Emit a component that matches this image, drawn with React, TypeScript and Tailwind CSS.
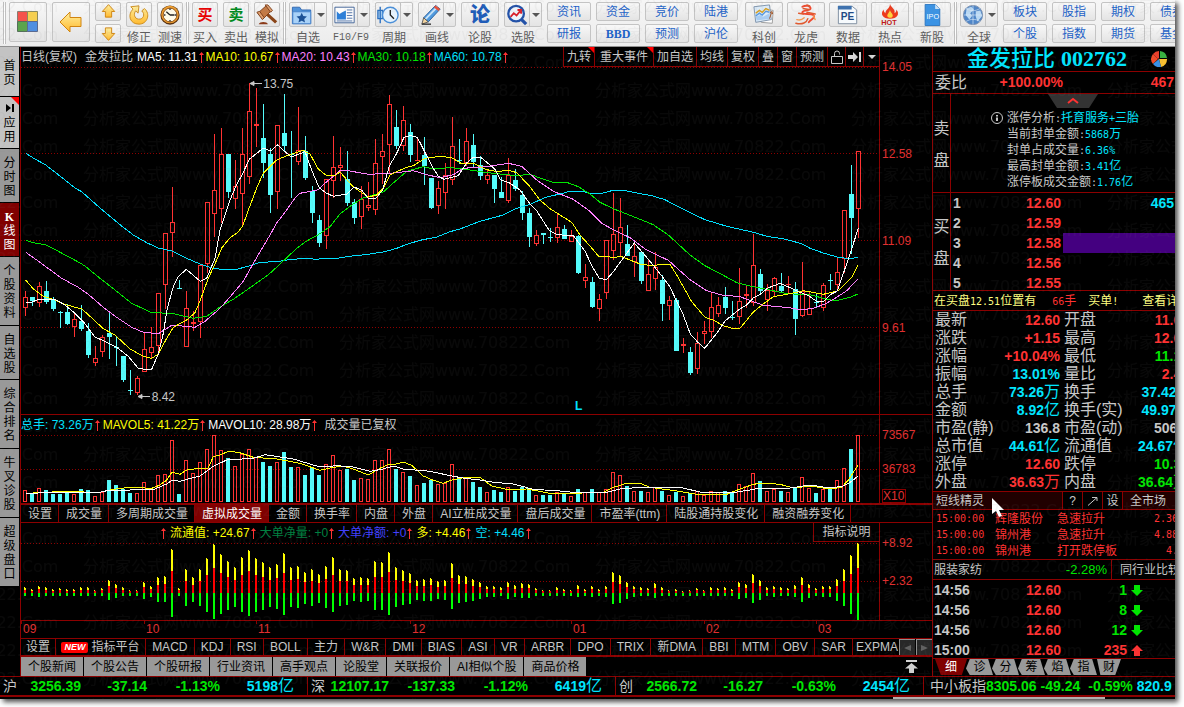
import React from 'react';
import clsx from 'clsx';

type Candle = [dir: 'u' | 'd', high: number, top: number, bottom: number, low: number];

// Series values are stored in thirds of a pixel
const CANDLES: Candle[] = [
  ['u', 693, 712, 745, 767], ['d', 711, 711, 723, 738], ['u', 666, 679, 728, 740], ['d', 662, 693, 727, 733],
  ['d', 712, 718, 747, 752], ['d', 754, 757, 760, 804], ['d', 733, 756, 792, 795], ['u', 757, 778, 800, 830],
  ['d', 736, 783, 807, 812], ['d', 790, 813, 886, 893], ['u', 858, 895, 908, 917], ['u', 826, 832, 875, 890],
  ['d', 755, 819, 831, 897], ['d', 828, 861, 864, 918], ['d', 888, 888, 960, 966], ['d', 931, 990, 993, 1004],
  ['u', 949, 955, 1000, 1006], ['u', 820, 868, 935, 935], ['u', 800, 862, 878, 893], ['u', 700, 700, 859, 885],
  ['u', 520, 520, 674, 747], ['u', 381, 487, 518, 590], ['d', 660, 684, 687, 687], ['u', 694, 745, 862, 862],
  ['u', 752, 787, 791, 813], ['u', 616, 616, 785, 833], ['u', 427, 427, 613, 640], ['u', 222, 391, 461, 530],
  ['u', 205, 281, 446, 488], ['d', 282, 282, 396, 414], ['u', 301, 379, 416, 447], ['u', 205, 283, 401, 498],
  ['u', 70, 154, 350, 372], ['u', 84, 192, 199, 260], ['d', 132, 234, 309, 353], ['d', 265, 282, 405, 459],
  ['u', 196, 196, 395, 447], ['d', 102, 219, 258, 277], ['d', 213, 281, 285, 414], ['u', 141, 271, 305, 314],
  ['d', 228, 273, 354, 359], ['d', 379, 393, 459, 489], ['d', 465, 480, 549, 561], ['u', 358, 358, 527, 567],
  ['u', 228, 322, 362, 414], ['u', 261, 316, 323, 362], ['d', 273, 357, 429, 438], ['d', 417, 426, 474, 492],
  ['u', 379, 418, 470, 507], ['u', 366, 435, 445, 452], ['u', 237, 310, 449, 465], ['u', 222, 274, 290, 372],
  ['u', 105, 133, 254, 338], ['d', 150, 201, 258, 266], ['u', 138, 181, 257, 272], ['d', 192, 216, 285, 306],
  ['u', 234, 299, 303, 303], ['d', 231, 285, 318, 375], ['d', 354, 354, 444, 447], ['u', 363, 385, 437, 461],
  ['u', 309, 345, 398, 447], ['u', 171, 259, 359, 375], ['d', 237, 300, 303, 312], ['u', 204, 244, 309, 318],
  ['d', 222, 255, 306, 321], ['d', 288, 315, 348, 360], ['u', 327, 346, 360, 372], ['d', 345, 345, 387, 429],
  ['d', 351, 396, 414, 414], ['u', 294, 344, 422, 429], ['d', 327, 360, 387, 393], ['d', 393, 405, 459, 480],
  ['d', 444, 459, 531, 561], ['u', 510, 525, 552, 557], ['d', 519, 519, 524, 552], ['d', 504, 531, 534, 546],
  ['u', 462, 502, 533, 548], ['d', 495, 507, 537, 537], ['u', 510, 528, 545, 545], ['d', 525, 528, 639, 642],
  ['u', 612, 652, 662, 684], ['d', 651, 666, 741, 744], ['u', 702, 718, 748, 782], ['u', 541, 541, 700, 716],
  ['u', 399, 523, 572, 600], ['u', 414, 502, 550, 590], ['d', 495, 552, 588, 588], ['u', 552, 589, 605, 651],
  ['d', 573, 576, 663, 672], ['u', 600, 643, 692, 692], ['u', 576, 622, 656, 689], ['d', 645, 660, 732, 783],
  ['u', 708, 721, 739, 779], ['d', 714, 720, 873, 873], ['u', 834, 853, 857, 879], ['d', 861, 876, 939, 945],
  ['u', 816, 848, 926, 942], ['u', 782, 814, 823, 851], ['u', 695, 742, 815, 833], ['u', 711, 736, 761, 771],
  ['d', 681, 711, 744, 762], ['d', 723, 771, 774, 780], ['u', 624, 724, 770, 792], ['u', 676, 703, 709, 744],
  ['u', 522, 616, 728, 738], ['d', 627, 642, 693, 699], ['u', 673, 690, 719, 753], ['u', 650, 655, 695, 710],
  ['d', 639, 678, 693, 698], ['u', 648, 671, 674, 702], ['d', 666, 687, 777, 825], ['u', 606, 693, 767, 771],
  ['u', 693, 745, 764, 764], ['d', 702, 726, 729, 741], ['u', 670, 676, 743, 753], ['d', 642, 660, 663, 690],
  ['u', 592, 637, 674, 686], ['u', 451, 451, 598, 640], ['d', 315, 402, 474, 582], ['u', 274, 274, 446, 533],
];

const VOLUMES = [
  240, 252, 235, 240, 252, 252, 249, 252, 237, 240, 258, 245, 210, 225, 237, 249, 250, 216, 234, 196,
  192, 91, 252, 151, 190, 157, 118, 76, 121, 144, 169, 133, 118, 142, 156, 168, 157, 126, 171, 172,
  195, 171, 195, 163, 136, 181, 177, 210, 205, 207, 151, 151, 118, 177, 186, 198, 226, 219, 210, 222,
  220, 163, 207, 204, 216, 231, 247, 240, 246, 232, 243, 231, 234, 256, 255, 255, 246, 252, 259, 237,
  247, 237, 247, 238, 187, 196, 228, 243, 243, 247, 232, 243, 256, 246, 259, 250, 244, 256, 244, 247,
  243, 250, 223, 229, 190, 213, 243, 238, 243, 247, 234, 202, 234, 249, 238, 237, 211, 175, 117, 76,
];

const FORCES = [
  530, 537, 529, 531, 537, 534, 538, 537, 532, 532, 541, 533, 511, 522, 531, 540, 540, 517, 528, 502,
  498, 418, 535, 478, 500, 478, 443, 402, 432, 454, 471, 442, 421, 445, 456, 470, 462, 430, 471, 468,
  487, 476, 492, 469, 442, 478, 480, 505, 501, 504, 454, 457, 425, 472, 480, 489, 511, 507, 503, 514,
  510, 460, 495, 498, 507, 517, 528, 528, 531, 517, 525, 519, 522, 535, 541, 540, 532, 538, 540, 526,
  537, 528, 537, 528, 487, 495, 517, 528, 531, 534, 520, 531, 540, 538, 542, 540, 534, 540, 531, 534,
  531, 537, 517, 522, 493, 511, 531, 528, 531, 534, 526, 502, 522, 535, 528, 528, 508, 478, 436, 400,
];

const MA_LINES = [
  {
    color: '#00e0ff',
    points: '77,280 100,294 137,315 175,344 225,384 245,395 300,444 360,494 400,525 440,548 475,564 515,573 560,595 600,612 635,624 665,628 710,628 750,617 780,607 830,605 860,600 915,595 950,598 975,595 1010,595 1055,588 1095,584 1155,575 1190,565 1215,555 1260,541 1310,531 1350,515 1380,507 1440,484 1480,473 1510,465 1545,447 1590,433 1640,411 1680,402 1710,394 1745,394 1775,401 1800,401 1840,391 1870,391 1905,398 1955,407 1995,419 2040,443 2115,479 2180,499 2260,517 2305,530 2350,536 2405,551 2430,565 2470,579 2515,592 2550,596 2574,592',
  },
  {
    color: '#00e600',
    points: '77,541 100,548 137,554 175,574 235,606 255,618 300,655 350,694 395,730 455,758 515,760 580,775 620,769 660,741 700,718 740,690 790,655 810,640 850,603 890,565 920,543 955,524 990,500 1020,462 1060,432 1090,414 1120,405 1150,396 1180,369 1220,334 1270,320 1295,326 1355,323 1410,330 1450,336 1490,341 1550,347 1590,343 1620,354 1660,367 1700,367 1735,380 1770,402 1800,427 1840,446 1905,472 1960,494 2005,525 2070,585 2115,617 2170,646 2210,668 2255,679 2310,690 2360,701 2430,704 2470,715 2505,723 2550,712 2574,702',
  },
  {
    color: '#ff80ff',
    points: '77,577 110,600 140,622 185,655 235,682 265,703 310,742 350,772 395,802 430,817 475,821 515,796 545,798 585,802 615,784 660,745 690,711 730,664 760,610 810,525 830,489 860,450 885,414 900,400 920,396 955,389 980,365 1020,332 1045,332 1105,343 1170,340 1240,332 1280,344 1320,353 1360,344 1390,325 1460,320 1525,310 1565,319 1610,360 1660,394 1720,418 1770,454 1805,490 1840,509 1890,533 1940,570 2005,601 2070,659 2120,692 2165,705 2220,710 2290,736 2370,743 2400,750 2440,745 2475,732 2510,712 2540,692 2574,657',
  },
  {
    color: '#ffff00',
    points: '77,660 100,687 130,709 160,718 185,730 215,739 245,747 265,764 310,806 345,825 390,867 430,889 455,895 475,882 500,835 520,802 560,780 585,758 600,723 625,655 645,612 665,564 690,533 715,516 728,498 745,451 770,384 790,340 830,300 860,287 910,271 930,282 955,327 980,347 1005,347 1020,336 1060,381 1105,411 1130,405 1150,385 1170,345 1190,335 1220,322 1240,317 1275,295 1320,289 1355,293 1385,311 1420,309 1460,329 1495,335 1525,330 1550,338 1590,380 1620,420 1650,446 1715,487 1740,525 1770,558 1795,588 1840,592 1865,590 1925,614 1955,616 2010,613 2030,645 2075,725 2115,772 2140,780 2170,797 2200,806 2220,805 2260,756 2290,732 2320,710 2370,701 2410,692 2470,703 2515,692 2555,652 2574,616',
  },
  {
    color: '#ffffff',
    points: '77,727 95,727 115,718 165,718 195,735 225,760 250,785 285,831 310,842 350,862 385,889 415,925 435,928 455,928 475,882 490,820 502,745 520,680 535,650 559,628 580,646 601,664 620,655 645,595 660,511 690,420 710,373 725,347 748,298 790,264 812,273 832,254 853,273 874,291 915,275 937,335 958,384 979,399 1000,409 1042,402 1063,381 1085,391 1105,415 1128,415 1148,390 1168,318 1190,280 1212,232 1232,227 1252,232 1273,273 1295,317 1315,349 1332,358 1375,347 1400,309 1420,292 1442,292 1462,308 1485,328 1502,360 1525,367 1560,390 1590,432 1610,452 1648,512 1672,524 1720,527 1756,575 1777,620 1798,655 1819,659 1840,635 1903,549 1945,598 1980,641 2008,677 2050,765 2071,822 2092,845 2114,865 2150,820 2176,782 2218,748 2240,735 2260,714 2285,700 2302,685 2340,670 2370,683 2400,697 2428,708 2448,723 2470,725 2491,704 2512,693 2533,632 2554,570 2575,505',
  },
];

const VOLUME_LINES = [
  {
    color: '#ffff00',
    points: '77,252 115,247 200,245 300,247 340,238 390,232 455,235 480,225 500,210 515,187 540,193 560,180 600,175 625,174 640,140 660,135 685,124 715,127 760,142 830,147 900,160 960,181 1000,172 1030,169 1060,177 1105,195 1140,175 1165,163 1185,163 1210,156 1235,166 1270,198 1300,211 1330,220 1355,210 1395,202 1440,202 1475,228 1530,240 1580,237 1650,250 1720,250 1810,247 1840,232 1880,220 1920,220 1950,232 2030,243 2090,253 2180,253 2220,237 2260,223 2290,219 2340,223 2380,234 2430,228 2490,237 2525,232 2545,210 2574,166',
  },
  {
    color: '#ffffff',
    points: '77,250 200,247 290,249 330,240 390,240 465,237 500,222 515,211 540,214 575,204 600,198 640,169 680,150 760,145 795,134 880,147 960,171 1010,167 1060,171 1110,184 1145,178 1180,168 1210,177 1290,184 1355,198 1395,205 1440,210 1480,217 1540,222 1600,238 1680,243 1740,249 1820,247 1860,237 1920,232 2040,232 2100,246 2190,249 2250,240 2280,234 2370,234 2430,225 2490,234 2530,228 2555,214 2574,198',
  },
];

const px = (v: number) => Math.round(v / 3);
const UP = '#ff3232';
const DOWN = '#54fcfc';

const shift = (points: string, dy: number) =>
  points
    .split(' ')
    .map((p) => {
      const [x, y] = p.split(',').map(Number);
      return `${(x / 3).toFixed(1)},${(y / 3 + dy).toFixed(1)}`;
    })
    .join(' ');

const Lines = ({ lines, dy }: { lines: { color: string; points: string }[]; dy: number }) => (
  <g fill="none" strokeWidth="1" shapeRendering="crispEdges">
    {lines.map((l) => (
      <polyline key={l.color} points={shift(l.points, dy)} stroke={l.color} />
    ))}
  </g>
);

const GridLines = ({ ys }: { ys: number[] }) => (
  <g stroke="#8c0000" strokeDasharray="1 2" shapeRendering="crispEdges">
    {ys.map((y) => (
      <line key={y} x1="21" x2="879" y1={y + 0.5} y2={y + 0.5} />
    ))}
  </g>
);

const PriceChart = () => (
  <svg className="block h-[347px] w-full" viewBox="21 0 858 347" preserveAspectRatio="none">
    <GridLines ys={[0, 86, 173, 260]} />
    <g shapeRendering="crispEdges">
      {CANDLES.map(([dir, high, top, bottom, low], i) => {
        const x = 25 + i * 7;
        const color = dir === 'u' ? UP : DOWN;
        const t = px(top) - 7;
        const b = Math.max(px(bottom) - 7, t + 1);
        return (
          <g key={i} fill={color}>
            <rect x={x} y={px(high) - 7} width="1" height={Math.max(t - px(high) + 7, 0)} />
            <rect x={x} y={b} width="1" height={Math.max(px(low) - 7 - b, 0)} />
            {dir === 'u' && b - t > 2 ? (
              <rect x={x - 1.5} y={t + 0.5} width="4" height={b - t - 1} fill="none" stroke={color} />
            ) : (
              <rect x={x - 2} y={t} width="5" height={b - t} />
            )}
          </g>
        );
      })}
    </g>
    <Lines lines={MA_LINES} dy={-7} />
    <g stroke="#c8c8c8" fill="#c8c8c8">
      <path d="M250 16.5h12M250 16.5l4-2v4zM138 329.5h12M138 329.5l4-2v4z" />
    </g>
  </svg>
);

const VolumeChart = () => (
  <svg className="block h-[68px] w-full" viewBox="21 0 858 68" preserveAspectRatio="none">
    <GridLines ys={[0, 34]} />
    <g shapeRendering="crispEdges">
      {VOLUMES.map((v, i) => {
        const x = 23 + i * 7;
        const top = px(v) - 25;
        return CANDLES[i][0] === 'u' ? (
          <rect key={i} x={x + 0.5} y={top + 0.5} width="3" height={66 - top} fill="none" stroke={UP} />
        ) : (
          <rect key={i} x={x} y={top} width="4" height={67 - top} fill={DOWN} />
        );
      })}
    </g>
    <Lines lines={VOLUME_LINES} dy={-25} />
  </svg>
);

const ForceChart = () => (
  <svg className="block h-[77px] w-full" viewBox="21 0 858 77" preserveAspectRatio="none">
    <GridLines ys={[0, 38]} />
    <g shapeRendering="crispEdges">
      {FORCES.map((v, i) => {
        const x = 24 + i * 7;
        const h = 50 - (px(v) - 133);
        const half = Math.round(h / 2);
        return (
          <g key={i}>
            <rect x={x} y={51 - h} width="2" height={h - half} fill="#ffff00" />
            <rect x={x} y={50 - h} width="1" height="1" fill="#ffff00" />
            <rect x={x} y={50 - half} width="2" height={half} fill="#ff0000" />
            <rect x={x} y="50" width="2" height={Math.max(Math.round(h * 0.54), 3)} fill="#00ff00" />
          </g>
        );
      })}
    </g>
  </svg>
);

/* ---------- toolbar ---------- */

const ICONS: Record<string, React.ReactNode> = {
  home: (
    <g strokeWidth="1">
      <path d="M1.500 1.500h10v10h-10z" fill="#f4524c" stroke="#8a7a70" />
      <path d="M11.500 1.500h10v10h-10z" fill="#f5cf50" stroke="#8a8a60" />
      <path d="M1.500 11.500h10v10h-10z" fill="#5ba44c" stroke="#55705a" />
      <path d="M11.500 11.500h10v10h-10z" fill="#4f8fe0" stroke="#5a6a90" />
    </g>
  ),
  back: <path d="M1 12L11 2v5.500h11v9H11V22z" fill="url(#gold)" stroke="#d08410" />,
  up: <path d="M12 1L22 12h-5v9H7v-9H2z" fill="url(#gold)" stroke="#d08410" strokeWidth="1.500" />,
  down: <path d="M12 23L22 12h-5V3H7v9H2z" fill="url(#gold)" stroke="#d08410" strokeWidth="1.500" />,
  fix: (
    <g>
      <path
        d="M3 3l9-1-1 8-2.500-2.500C6 10 6.500 16 11.500 16.500 17 17 19 11 15 7.500L18 5c7 6 3 17-6 17C2 22-1 12 5.500 5.500z"
        fill="url(#gold)"
        stroke="#c98a1c"
        strokeLinejoin="round"
      />
    </g>
  ),
  clock: (
    <g>
      <circle cx="12" cy="12" r="10.500" fill="#5a3210" />
      <circle cx="12" cy="11.500" r="9.500" fill="#f0a030" />
      <circle cx="12" cy="12" r="7.500" fill="#fffbe8" stroke="#8a4a10" />
      <path d="M12 12L8 8.500M12 12h5M12 5v1.500M12 17.500V19M5.500 12H7M17.500 12H19" stroke="#222" strokeWidth="1.400" fill="none" />
    </g>
  ),
  gavel: (
    <g>
      <path d="M12 11l10 9" stroke="#8a4518" strokeWidth="3.500" />
      <path d="M2 10l9-8 6 5-9 9z" fill="#c47a45" stroke="#7a3c18" />
      <path d="M1 9l3-1 5 7-2 2zM10 1l3 0 5 6-2 2z" fill="#e0a070" stroke="#7a3c18" />
      <path d="M3 22c1-3 9-3 10 0z" fill="#8a3a18" />
    </g>
  ),
  folder: (
    <g>
      <path d="M1.500 3.500h8l2 3h10v15h-20z" fill="#4f93dc" stroke="#2d66b0" />
      <path d="M2 8.500h19.500v13H2z" fill="#a9d2f8" stroke="#4a86cc" />
      <path d="M11.700 9.500l1.700 3.700 4 .4-3 2.700.9 4-3.600-2.100-3.600 2.100.9-4-3-2.700 4-.4z" fill="#1d5296" />
    </g>
  ),
  news: (
    <g>
      <path d="M1 3.500h21v17H1z" fill="#fdfdfd" stroke="#3b5f94" />
      <path d="M3 8l3 3 3-2 4-2v10H3z" fill="#2d7fd8" />
      <path d="M14 6.500h6M14 9.500h6M14 12.500h6M3 18.500h17M14 15.500h6" stroke="#4a6fa5" />
    </g>
  ),
  period: (
    <g fill="none">
      <path d="M3.500 3v18M1 7h5v9H1z" stroke="#2a6fc0" strokeWidth="1.500" fill="#bfe0fa" />
      <circle cx="14.500" cy="12" r="8.500" fill="#e6f2fc" stroke="#4a8fd8" strokeWidth="1.500" />
      <path d="M14.500 6.500V12l4 4" stroke="#222" strokeWidth="1.500" />
    </g>
  ),
  pen: (
    <g>
      <path d="M4 15L17 1.500l5 4L9 19.500z" fill="#4f9ade" stroke="#2a5f9c" />
      <path d="M6 16.500L19 3" stroke="#c8e4fb" strokeWidth="2" />
      <path d="M17 1.500l5 4-2 2-5-4z" fill="#e85038" />
      <path d="M4 15l5 4.500-7 2.500z" fill="#f3d5a0" stroke="#555" />
      <path d="M2 22h10" stroke="#333" strokeWidth="1.500" />
    </g>
  ),
  pick: (
    <g fill="none">
      <circle cx="11" cy="10.500" r="8.500" stroke="#2352a8" strokeWidth="2.500" fill="#eef4fc" />
      <path d="M17 17l5 5" stroke="#2352a8" strokeWidth="3.500" />
      <path d="M5 14l3.500-4 3 2.500L16 7M12.500 6.500H16.500V10.500" stroke="#d8202c" strokeWidth="2" />
    </g>
  ),
  star: (
    <g>
      <path d="M10 5l12 2-1 14-12-1z" fill="#fff" stroke="#999" />
      <path d="M1 3l17-2 2 16-17 3z" fill="#dcebf8" stroke="#7a8fa8" />
      <path d="M3 14l5-2 3 2 7-4 1 6-15 2z" fill="#a9cdf2" />
      <path d="M3 13l4-3 3 2 4-4 4 1" stroke="#5a9ae0" strokeWidth="1.500" fill="none" />
      <path d="M3 10l4-3 3 2 4-4 4 2" stroke="#d8a020" strokeWidth="1.500" fill="none" />
      <path d="M18 16l2.500-7M18.500 10l2-2 1 3" stroke="#a05020" fill="none" />
    </g>
  ),
  dragon: (
    <g fill="none" strokeLinecap="round">
      <path d="M8 3c4-2 9-1 9 2s-8 1-9 4 9 1 12 3c3 3-3 5-5 8" stroke="#ee4a30" strokeWidth="2" />
      <path d="M1 21c7 2 12-1 13-5M9 5l6 1M13 1l3 1M4 10l5 1M13 9l9 2" stroke="#e05a30" strokeWidth="1.600" />
      <path d="M2 17c3 1 6 0 8-2M20 13l2 4" stroke="#f59a50" strokeWidth="1.500" />
    </g>
  ),
  pe: (
    <g>
      <path d="M1.500 2.500h15l5 4v15h-20z" fill="#f6fafd" stroke="#7a8a9c" />
      <path d="M1 2h15v4H1z" fill="#3f72ae" />
      <text x="4" y="17" fontSize="11" fontWeight="700" fontFamily="Liberation Sans" fill="#1f4a86">PE</text>
    </g>
  ),
  hot: (
    <g>
      <path d="M12 0c1 4 6 5 5 10 2-1 2-3 2-4 4 5 1 10-7 10S1 11 5 6c0 2 1 3 2 4 0-4 5-5 5-10z" fill="#ee3a1c" />
      <path d="M12 6c0 3 3 4 3 6.500S13 15 12 15s-3-.500-3-2.500S12 9 12 6z" fill="#ffd23c" />
      <text x="2.500" y="23" fontSize="8" fontWeight="700" fontFamily="Liberation Sans" fill="#c01818">HOT</text>
    </g>
  ),
  ipo: (
    <g>
      <path d="M4.500.500h11l5 5v18h-16z" fill="#3b93e4" stroke="#2a74c0" />
      <path d="M15.500.500l5 5h-5z" fill="#cfe6fa" />
      <text x="6" y="16" fontSize="8" fontFamily="Liberation Sans" fill="#fff">IPO</text>
    </g>
  ),
  globe: (
    <g>
      <circle cx="12" cy="12" r="10.500" fill="#4f86c8" stroke="#7a8fae" />
      <path d="M5 5l5-2 3 3-4 4 2 3-3 4-4-5zM15 8l5-1 2 6-5 6-2-5z" fill="#b9d8f3" />
      <path d="M2 12h20M12 1.500v21M4.500 5c5 3 10 3 15 0M4.500 19c5-3 10-3 15 0" stroke="#dcebf8" strokeWidth=".7" fill="none" />
    </g>
  ),
};

const Icon = ({ name, className = 'size-[24px]' }: { name: string; className?: string }) => (
  <svg viewBox="0 0 24 24" className={className}>
    <defs>
      <linearGradient id="gold" x2="0" y2="1">
        <stop offset="0" stopColor="#fff0a0" />
        <stop offset="1" stopColor="#ffb92e" />
      </linearGradient>
    </defs>
    {ICONS[name]}
  </svg>
);

const BOX = 'rounded-[2px] border border-[#c4c4c4] bg-linear-to-b from-[#f8f8f8] to-[#e4e4e4]';

interface ToolProps {
  label: string;
  icon?: string;
  glyph?: React.ReactNode;
  split?: boolean;
  narrow?: boolean;
}

const Tool = ({ label, icon, glyph, split, narrow }: ToolProps) => (
  <button className={clsx('flex shrink-0 flex-col items-center', narrow ? 'w-[26px]' : 'w-[38px]')}>
    <span className={clsx(BOX, 'flex h-[25px] w-full')}>
      <span className="flex flex-1 items-center justify-center">
        {icon ? <Icon name={icon} className="size-[22px]" /> : glyph}
      </span>
      {split && (
        <span className="flex w-3 items-center justify-center border-l border-[#c4c4c4]">
          <svg viewBox="0 0 8 4" className="h-1 w-2">
            <path d="M0 0h8L4 4z" fill="#555" />
          </svg>
        </span>
      )}
    </span>
    <span
      className={clsx(
        'mt-1 whitespace-nowrap leading-[14px] text-[#5c5c5c]',
        label === 'F10/F9' && "font-['Liberation_Mono'] text-[10px]",
      )}
    >
      {label}
    </span>
  </button>
);

const Pair = ({ items }: { items: [string, string] }) => (
  <span className="flex w-[44px] shrink-0 flex-col gap-[3px] text-[#1c62c8]">
    {items.map((t) => (
      <button
        key={t}
        className={clsx(BOX, 'h-[19px] leading-none', t === 'BBD' && "font-['Liberation_Serif'] font-bold")}
      >
        {t}
      </button>
    ))}
  </span>
);

const Grip = () => <span className="mx-[3px] h-[42px] w-[3px] shrink-0 border-x border-[#c0c0c0] bg-white" />;

const Toolbar = () => (
  <header className="flex h-[47px] items-start overflow-hidden border-b border-[#909090] bg-linear-to-b from-[#f6f6f6] to-[#ececec] pt-[2px]">
    <Grip />
    <div className="flex gap-[5px]">
      <button aria-label="首页" className={clsx(BOX, 'flex h-10 w-[38px] items-center justify-center')}>
        <Icon name="home" />
      </button>
      <button aria-label="返回" className={clsx(BOX, 'flex h-10 w-[38px] items-center justify-center')}>
        <Icon name="back" />
      </button>
      <span className="flex w-[26px] flex-col gap-[3px]">
        <button aria-label="上" className={clsx(BOX, 'flex h-[19px] items-center justify-center')}>
          <Icon name="up" className="size-[15px]" />
        </button>
        <button aria-label="下" className={clsx(BOX, 'flex h-[19px] items-center justify-center')}>
          <Icon name="down" className="size-[15px]" />
        </button>
      </span>
      <Tool label="修正" icon="fix" narrow />
      <Tool label="测速" icon="clock" narrow />
    </div>
    <Grip />
    <div className="flex gap-[5px]">
      <Tool label="买入" narrow glyph={<b className="text-[15px] leading-none text-[#e80000]">买</b>} />
      <Tool label="卖出" narrow glyph={<b className="text-[15px] leading-none text-[#008a20]">卖</b>} />
      <Tool label="模拟" icon="gavel" narrow />
    </div>
    <Grip />
    <div className="flex gap-[5px]">
      <Tool label="自选" icon="folder" split />
      <Tool label="F10/F9" icon="news" split />
      <Tool label="周期" icon="period" split />
      <Tool label="画线" icon="pen" split />
      <Tool label="论股" glyph={<b className="text-[20px] font-black leading-none text-[#1f5cb8]">论</b>} />
      <Tool label="选股" icon="pick" split />
      <Pair items={['资讯', '研报']} />
      <Pair items={['资金', 'BBD']} />
      <Pair items={['竞价', '预测']} />
      <Pair items={['陆港', '沪伦']} />
    </div>
    <div className="ml-[7px] flex gap-1">
      <Tool label="科创" icon="star" />
      <Tool label="龙虎" icon="dragon" />
      <Tool label="数据" icon="pe" />
      <Tool label="热点" icon="hot" />
      <Tool label="新股" icon="ipo" />
    </div>
    <Grip />
    <div className="flex gap-[5px]">
      <Tool label="全球" icon="globe" split />
      <Pair items={['板块', '个股']} />
      <Pair items={['股指', '指数']} />
      <Pair items={['期权', '期货']} />
      <Pair items={['债券', '基金']} />
    </div>
  </header>
);

/* ---------- left nav ---------- */

const NAV = [
  { label: '首页', cls: 'h-[49px] bg-[#c3c3c3]' },
  { label: '应用', cls: 'h-[51px] bg-[#c3c3c3]', mark: true },
  { label: '分时图', cls: 'h-[53px] bg-[#999999]' },
  { label: 'K线图', cls: 'h-[53px] bg-[#800000] text-white' },
  { label: '个股资料', cls: 'h-[68px] bg-[#999999]' },
  { label: '自选股', cls: 'h-[53px] bg-[#999999]' },
  { label: '综合排名', cls: 'h-[68px] bg-[#999999]' },
  { label: '牛叉诊股', cls: 'h-[68px] bg-[#999999]' },
  { label: '超级盘口', cls: 'h-[68px] bg-[#999999]' },
];

const SideNav = () => (
  <nav className="flex w-5 shrink-0 flex-col gap-px pr-px">
    {NAV.map(({ label, cls, mark }) => (
      <button key={label} className={clsx('relative flex w-full flex-col items-center justify-center pt-0.5', cls)}>
        {mark && (
          <>
            <svg viewBox="0 0 8 8" className="absolute right-0 top-0 size-2">
              <path d="M0 0h8v8z" fill="#f00" />
            </svg>
            <svg viewBox="0 0 8 8" className="mb-1 size-2">
              <path d="M0 0l5 4-5 4zM6 0h2v8H6z" />
            </svg>
          </>
        )}
        {[...label].map((c) => (
          <span key={c} className={clsx('leading-[14px]', c === 'K' && "font-['Liberation_Serif'] font-bold")}>
            {c}
          </span>
        ))}
      </button>
    ))}
  </nav>
);

/* ---------- charts ---------- */

const Rise = () => (
  <svg viewBox="0 0 5 11" className="mx-px inline-block h-[11px] w-[5px]">
    <path d="M2.500 0L5 3H3v8H2V3H0z" fill="#ff3232" />
  </svg>
);

const Stat = ({ text, cls }: { text: string; cls: string }) => (
  <span className={clsx('flex items-center whitespace-nowrap', cls)}>
    {text}
    <Rise />
  </span>
);

const HEAD_BUTTONS = ['九转', '重大事件', '加自选', '均线', '复权', '叠', '窗', '预测'];

const ChartHeader = () => (
  <div className="flex h-5 items-center text-[#c8c8c8]">
    <span>日线(复权)</span>
    <span className="ml-2 mr-1">金发拉比</span>
    <div className="flex flex-1 gap-px">
      <Stat text="MA5: 11.31" cls="text-white" />
      <Stat text="MA10: 10.67" cls="text-[#ffff00]" />
      <Stat text="MA20: 10.43" cls="text-[#ff80ff]" />
      <Stat text="MA30: 10.18" cls="text-[#00e600]" />
      <Stat text="MA60: 10.78" cls="text-[#00e0ff]" />
    </div>
    <div className="flex h-5 shrink-0 border-b border-[#8c0000]">
      {HEAD_BUTTONS.map((b, i) => (
        <button
          key={b}
          className={clsx('relative whitespace-nowrap border-l border-[#8c0000] leading-none', i === 1 ? 'px-[5px]' : 'px-[3px]')}
        >
          {b}
          {i < 2 && (
            <svg viewBox="0 0 6 6" className="absolute right-0 top-0 size-1.5">
              <path d="M0 0h6v6z" fill="#f00" />
            </svg>
          )}
        </button>
      ))}
      <button aria-label="锁定" className="flex w-[18px] items-center justify-center border-l border-[#8c0000]">
        <svg viewBox="0 0 12 14" className="h-[14px] w-3" fill="none" stroke="#c8c8c8">
          <path d="M.500 6.500h11v7H.500zM3.500 6.500v-3a2.500 2.500 0 015 0v1" />
        </svg>
      </button>
      <button aria-label="最新" className="flex w-[18px] items-center justify-center border-l border-[#8c0000]">
        <svg viewBox="0 0 13 10" className="h-[10px] w-[13px]" fill="#d8d8d8">
          <path d="M0 3h5V0l5 5-5 5V7H0zM11 0h2v10h-2z" />
        </svg>
      </button>
      <button aria-label="更多" className="flex w-4 items-center justify-center border-l border-[#8c0000]">
        <svg viewBox="0 0 8 4" className="h-1 w-2" fill="#d8d8d8">
          <path d="M0 0h8L4 4z" />
        </svg>
      </button>
    </div>
  </div>
);

const AXIS = 'flex w-[53px] shrink-0 flex-col border-l border-[#8c0000] pl-0.5 pt-3 text-[#e03030]';

const VOLUME_TABS = [
  '设置', '成交量', '多周期成交量', '虚拟成交量', '金额', '换手率', '内盘', '外盘', 'AI立桩成交量',
  '盘后成交量', '市盈率(ttm)', '陆股通持股变化', '融资融券变化',
];

const INDICATORS = [
  'MACD', 'KDJ', 'RSI', 'BOLL', '主力', 'W&R', 'DMI', 'BIAS', 'ASI', 'VR', 'ARBR', 'DPO', 'TRIX',
  '新DMA', 'BBI', 'MTM', 'OBV', 'SAR',
];

const NEWS_TABS = ['个股新闻', '个股公告', '个股研报', '行业资讯', '高手观点', '论股堂', '关联报价', 'AI相似个股', '商品价格'];

const ChartPanel = () => (
  <main className="flex min-w-0 flex-1 flex-col overflow-hidden border-l border-[#8c0000]">
    <section className="flex border-b border-[#8c0000]">
      <div className="relative min-w-0 flex-1">
        <ChartHeader />
        <PriceChart />
        <span className="absolute left-[28%] top-[29px] pl-0.5 leading-4 text-[#c8c8c8]">13.75</span>
        <span className="absolute left-[15%] top-[342px] pl-0.5 leading-4 text-[#c8c8c8]">8.42</span>
        <b className="absolute bottom-0 left-[65%] -translate-x-1/2 leading-4 text-[#00e0ff]">L</b>
      </div>
      <div className={clsx(AXIS, 'gap-[71px] leading-4')}>
        <span>14.05</span>
        <span>12.58</span>
        <span>11.09</span>
        <span>9.61</span>
      </div>
    </section>

    <section className="flex border-b border-[#8c0000]">
      <div className="min-w-0 flex-1">
        <div className="flex h-5 items-center gap-0.5 text-[#c8c8c8]">
          <Stat text="总手: 73.26万" cls="text-[#00e0ff]" />
          <Stat text="MAVOL5: 41.22万" cls="text-[#ffff00]" />
          <Stat text="MAVOL10: 28.98万" cls="text-white" />
          <span className="ml-1">成交量已复权</span>
        </div>
        <VolumeChart />
      </div>
      <div className={clsx(AXIS, 'leading-4')}>
        <span>73567</span>
        <span className="mt-[18px]">36783</span>
        <span className="mt-3 w-6 border border-[#8c0000] leading-[12px]">X10</span>
      </div>
    </section>

    <div className="flex h-[19px] border-y border-[#8c0000] text-[#c8c8c8]">
      {VOLUME_TABS.map((t, i) => (
        <button
          key={t}
          className={clsx(
            'whitespace-nowrap border-r border-[#8c0000] pl-[7px] pr-1.5 leading-none',
            i === 3 && 'bg-[#800000] text-white',
          )}
        >
          {t}
        </button>
      ))}
    </div>

    <section className="flex border-b border-[#8c0000]">
      <div className="min-w-0 flex-1">
        <div className="flex h-5 items-start">
          <div className="ml-[139px] flex h-5 flex-1 items-center gap-[3px]">
            <Stat text="" cls="" />
            <Stat text="流通值: +24.67" cls="text-[#ffff00]" />
            <Stat text="大单净量: +0" cls="text-[#008040]" />
            <Stat text="大单净额: +0" cls="text-[#4040ff]" />
            <Stat text="多: +4.46" cls="text-[#ffff00]" />
            <Stat text="空: +4.46" cls="text-[#00e0ff]" />
          </div>
          <button className="h-[19px] w-[66px] border-b border-l border-[#8c0000] leading-none text-[#c8c8c8]">
            指标说明
          </button>
        </div>
        <ForceChart />
      </div>
      <div className={clsx(AXIS, 'gap-[22px] leading-4')}>
        <span>+8.92</span>
        <span>+2.32</span>
      </div>
    </section>

    <div className="mr-[53px] grid h-[17px] grid-cols-[123fr_112fr_154fr_161fr_133fr_112fr_63fr] text-[#e03030]">
      {['09', '10', '11', '12', '01', '02', '03'].map((m) => (
        <span key={m} className="flex gap-px leading-[17px]">
          <i className="h-[3px] w-px bg-[#8c0000]" />
          {m}
        </span>
      ))}
    </div>

    <div className="flex h-[19px] border-b-2 border-t border-[#8c0000] text-[#c8c8c8]">
      <button className="w-[35px] shrink-0 border-r border-[#8c0000] leading-none">设置</button>
      <button className="flex w-[90px] shrink-0 items-center justify-center gap-[3px] border-r border-[#8c0000] leading-none">
        <span className="rounded-[2px] bg-[#ff0000] px-[3px] text-[9px] font-bold italic leading-[11px] text-white">NEW</span>
        指标平台
      </button>
      {INDICATORS.map((t) => (
        <button key={t} className="flex-auto whitespace-nowrap border-r border-[#8c0000] px-1.5 leading-none">
          {t}
        </button>
      ))}
      <button className="w-[45px] shrink-0 overflow-hidden pl-[3px] text-left leading-none">EXPMA</button>
      {['M9 1v6L2 4z', 'M2 1v6l7-3z'].map((d, i) => (
        <button
          key={d}
          aria-label={i ? '右移' : '左移'}
          className="ml-px flex w-4 shrink-0 items-center justify-center border-l border-t border-[#909090] bg-[#282828]"
        >
          <svg viewBox="0 0 11 8" className="h-2 w-[11px]" fill="#606060">
            <path d={d} />
          </svg>
        </button>
      ))}
    </div>

    <div className="flex h-[19px] items-stretch gap-px">
      {NEWS_TABS.map((t) => (
        <button key={t} className="whitespace-nowrap bg-[#999999] px-[7px] leading-none text-black">
          {t}
        </button>
      ))}
      <button aria-label="置顶" className="ml-auto mr-3.5 flex items-center">
        <svg viewBox="0 0 13 13" className="size-[13px]" fill="#d0d0d0">
          <path d="M1 0h11v2H1zM6.500 3L13 8.500H9V13H4V8.500H0z" />
        </svg>
      </button>
    </div>
  </main>
);

/* ---------- quote panel ---------- */

const COLORS = {
  r: 'text-[#ff3232]',
  g: 'text-[#00e600]',
  c: 'text-[#00e6ff]',
  w: 'text-[#c8c8c8]',
};
type Tone = keyof typeof COLORS;

const QUOTES: [string, string, Tone, string, string, Tone][] = [
  ['最新', '12.60', 'r', '开盘', '11.04', 'r'],
  ['涨跌', '+1.15', 'r', '最高', '12.60', 'r'],
  ['涨幅', '+10.04%', 'r', '最低', '11.10', 'g'],
  ['振幅', '13.01%', 'c', '量比', '2.45', 'r'],
  ['总手', '73.26万', 'c', '换手', '37.42%', 'c'],
  ['金额', '8.92亿', 'c', '换手(实)', '49.97%', 'c'],
  ['市盈(静)', '136.8', 'w', '市盈(动)', '506.2', 'w'],
  ['总市值', '44.61亿', 'c', '流通值', '24.67亿', 'c'],
  ['涨停', '12.60', 'r', '跌停', '10.31', 'g'],
  ['外盘', '36.63万', 'r', '内盘', '36.64万', 'g'],
];

// Digits are bold, the unit after them is a larger regular glyph
const Num = ({ value, tone, className }: { value: string; tone: Tone; className?: string }) => {
  const unit = /[万亿]$/.test(value) ? value.slice(-1) : '';
  return (
    <span className={clsx('flex items-center justify-end whitespace-nowrap text-[14px] font-bold', COLORS[tone], className)}>
      {unit ? value.slice(0, -1) : value}
      {unit && <span className="text-[16px] font-normal">{unit}</span>}
    </span>
  );
};

const LIMIT_INFO = [
  ['涨停分析', '托育服务+三胎'],
  ['当前封单金额', '5868万'],
  ['封单占成交量', '6.36%'],
  ['最高封单金额', '3.41亿'],
  ['涨停板成交金额', '1.76亿'],
];

const BIDS = ['12.60', '12.59', '12.58', '12.56', '12.55'];

const ALERTS = [
  ['辉隆股份', '急速拉升', '2.36%'],
  ['锦州港', '急速拉升', '4.88%'],
  ['锦州港', '打开跌停板', '4.1'],
];

const TRADES: [string, string, Tone][] = [
  ['14:56', '1', 'g'],
  ['14:56', '8', 'g'],
  ['14:56', '12', 'g'],
  ['15:00', '235', 'r'],
];

const MONO = "font-['DejaVu_Sans_Mono','Noto_Sans_CJK_SC',monospace]";

// Latin characters run smaller than the Chinese ones beside them
const Mixed = ({ text }: { text: string }) => (
  <>
    {text.split(/([\x21-\x7e]+)/).map((part, i) =>
      i % 2 ? (
        <span key={i} className={clsx(MONO, 'text-[10px]')}>
          {part}
        </span>
      ) : (
        part
      ),
    )}
  </>
);

const SideLabel = ({ text }: { text: string }) => (
  <span className="flex w-[18px] shrink-0 flex-col items-center justify-center gap-4 border-r border-[#8c0000] pt-[3px] text-[16px] leading-4">
    {[...text].map((c) => (
      <span key={c}>{c}</span>
    ))}
  </span>
);

const QuotePanel = () => (
  <aside className="relative w-[243px] shrink-0 overflow-hidden border-l border-[#8c0000] text-[#c8c8c8]">
    <div className="w-[256px]">
      <h1 className="flex h-6 items-center pl-[34px] font-['Liberation_Serif','Noto_Sans_CJK_SC',serif] text-[22px] font-bold leading-none text-[#00e6ff]">
        <span className="font-medium">金发拉比</span>
        <span className="ml-1.5">002762</span>
        <svg viewBox="0 0 16 16" className="ml-6 size-4">
          <path d="M7 8L2 3a8 8 0 000 10z" fill="#f04a28" />
          <path d="M8 7V0a8 8 0 00-6 3l5 5z" fill="#e8402c" />
          <path d="M9 7V0a8 8 0 017 7z" fill="#38b040" />
          <path d="M8 8h8a8 8 0 01-6 8z" fill="#f8c030" />
          <path d="M8 8l2 8a8 8 0 01-8-3z" fill="#3890e8" />
        </svg>
      </h1>

      <div className="flex h-[23px] items-center border-y border-[#8c0000] pl-0.5 text-[16px]">
        委比
        <Num value="+100.00%" tone="r" className="w-24" />
        <Num value="467" tone="r" className="flex-1 pr-[15px]" />
      </div>

      <div className="flex h-[99px] border-b border-[#8c0000]">
        <SideLabel text="卖盘" />
        <div className="flex-1">
          <button aria-label="收起" className="ml-[97px] block h-3.5 w-[50px]">
            <svg viewBox="0 0 50 14" className="h-3.5 w-[50px]">
              <path d="M0 0h50L41 14H9z" fill="#333" />
              <path d="M20 9l5-4 5 4" fill="none" stroke="#ff3232" strokeWidth="2" />
            </svg>
          </button>
          <div className="pl-[56px] pt-0.5">
            {LIMIT_INFO.map(([k, v], i) => (
              <p key={k} className="relative h-4 whitespace-nowrap leading-4">
                {i === 0 && (
                  <svg viewBox="0 0 12 12" className="absolute -left-4 top-0.5 size-3" fill="none" stroke="#c8c8c8">
                    <circle cx="6" cy="6" r="5.500" />
                    <path d="M6 3v1.500M6 5.500V9" strokeWidth="2" />
                  </svg>
                )}
                {k}
                <Mixed text=":" />
                <span className="text-[#00e6ff]">
                  <Mixed text={v} />
                </span>
              </p>
            ))}
          </div>
        </div>
      </div>

      <div className="flex h-[98px] border-b border-[#8c0000]">
        <SideLabel text="买盘" />
        <div className="flex-1">
          {BIDS.map((price, i) => (
            <div key={price} className="flex h-5 items-center text-[14px] font-bold">
              <span className="ml-0.5 w-5">{i + 1}</span>
              <Num value={price} tone="r" className="w-[88px]" />
              {i === 0 && <Num value="465" tone="c" className="flex-1 pr-[15px]" />}
              {i === 2 && <span className="ml-0.5 h-5 flex-1 bg-[#440080]" />}
            </div>
          ))}
        </div>
      </div>

      <div className="flex h-5 items-center whitespace-nowrap border-b border-[#8c0000] pl-px leading-none text-[#ffff80]">
        <span><Mixed text="在买盘12.51位置有" /></span>
        <span className="ml-4 text-[#ff3232]"><Mixed text="66手" /></span>
        <span className="ml-3"><Mixed text="买单!" /></span>
        <a href="#detail" className="ml-6">查看详情</a>
      </div>

      {QUOTES.map(([k1, v1, t1, k2, v2, t2]) => (
        <dl key={k1} className="grid h-[18px] grid-cols-[125px_1fr] gap-1 pl-0.5 text-[16px] leading-[18px]">
          <div className="flex justify-between whitespace-nowrap">
            <dt>{k1}</dt>
            <dd className="flex"><Num value={v1} tone={t1} /></dd>
          </div>
          <div className="flex justify-between whitespace-nowrap">
            <dt>{k2}</dt>
            <dd className="flex"><Num value={v2} tone={t2} /></dd>
          </div>
        </dl>
      ))}

      <div className="flex h-[19px] items-stretch border-y border-[#8c0000] bg-[#200000] leading-none">
        <span className="flex flex-1 items-center pl-[3px]">短线精灵</span>
        <button className="w-5 border-l border-[#8c0000] bg-black">?</button>
        <button aria-label="展开" className="flex w-5 items-center justify-center border-l border-[#8c0000] bg-black">
          <svg viewBox="0 0 10 10" className="size-[10px]" fill="none" stroke="#c8c8c8">
            <path d="M0 9.500L9 1.500M4 1.500h5V5" />
          </svg>
        </button>
        <button className="w-5 border-l border-[#8c0000] bg-black">设</button>
        <button className="w-[67px] border-l border-[#8c0000] pl-[7px] text-left">全市场</button>
      </div>

      <div className="border-b border-[#8c0000] pt-px text-[#ff3232]">
        {ALERTS.map(([name, event, value], i) => (
          <div key={i} className="grid h-4 grid-cols-[59px_62px_1fr] items-center whitespace-nowrap pl-[3px] pr-[5px] leading-none">
            <span className={clsx(MONO, 'text-[10px]')}>15:00:00</span>
            <span className="flex">{name}</span>
            <span className="flex items-center justify-between">
              {event}
              <span className={clsx(MONO, 'text-[10px]')}>{value}</span>
            </span>
          </div>
        ))}
      </div>

      <div className="flex h-5 items-stretch border-b border-[#8c0000]">
        <span className="flex w-32 items-center pl-px">服装家纺</span>
        <span className="flex w-[46px] items-center justify-end text-[13px] text-[#00e600]">-2.28%</span>
        <button className="ml-1 flex-1 whitespace-nowrap border-l border-[#8c0000] pl-2 text-left">同行业比较</button>
      </div>

      <table className="w-[210px] text-[14px] font-bold leading-5">
        <tbody>
          {TRADES.map(([time, qty, tone], i) => (
            <tr key={i} className="h-5">
              <td className="w-[60px] p-0 pl-px">{time}</td>
              <td className="w-[68px] p-0 text-right text-[#ff3232]">12.60</td>
              <td className={clsx('w-[66px] p-0 text-right', COLORS[tone])}>{qty}</td>
              <td className="p-0 pl-1">
                <svg viewBox="0 0 12 11" className="h-[11px] w-3">
                  <path
                    d={tone === 'g' ? 'M3 0h6v5h3l-6 6-6-6h3z' : 'M3 11h6V6h3L6 0 0 6h3z'}
                    fill={tone === 'g' ? '#00e600' : '#ff3232'}
                  />
                </svg>
              </td>
            </tr>
          ))}
        </tbody>
      </table>

      <div className="-mt-0.5 flex h-[17px] border-t border-[#8c0000] pl-0.5">
        <button className="w-8 bg-[#800000] leading-none text-white [clip-path:polygon(0_0,100%_0,84%_100%,18%_100%)]">细</button>
        {['诊', '分', '筹', '焰', '指'].map((t) => (
          <button
            key={t}
            className="-ml-px w-[27px] bg-[#999999] leading-none text-black [clip-path:polygon(14%_0,82%_0,100%_100%,14%_100%,0_60%)]"
          >
            {t}
          </button>
        ))}
        <button className="w-6 bg-[#999999] leading-none text-black [clip-path:polygon(0_0,100%_0,76%_100%,14%_100%)]">财</button>
      </div>
    </div>

    <svg viewBox="0 0 12 19" className="absolute left-[59px] top-[451px] h-[19px] w-3">
      <path d="M0 0v16l4-3 3 6 3-1-3-6h5z" fill="#fff" />
    </svg>
  </aside>
);

/* ---------- status bar ---------- */

const MARKETS = [
  ['沪', '3256.39', '-37.14', '-1.13%', '5198亿'],
  ['深', '12107.17', '-137.33', '-1.12%', '6419亿'],
  ['创', '2566.72', '-16.27', '-0.63%', '2454亿'],
];

const StatusBar = () => (
  <footer className="flex h-[21px] overflow-hidden border-b-2 border-t border-[#8c0000] text-[#c8c8c8]">
    {MARKETS.map(([name, index, diff, pct, amount]) => (
      <div
        key={name}
        className="grid w-[308px] shrink-0 grid-cols-[78px_66px_73px_74px] items-center border-r border-[#8c0000] pl-[3px] leading-none"
      >
        <span className="flex items-center justify-between text-[14px]">
          {name}
          <Num value={index} tone="g" />
        </span>
        <Num value={diff} tone="g" />
        <Num value={pct} tone="g" />
        <Num value={amount} tone="c" />
      </div>
    ))}
    <div className="flex items-center whitespace-nowrap pl-1.5 text-[14px] leading-none">
      中小板指
      <Num value="8305.06" tone="g" />
      <Num value="-49.24" tone="g" className="ml-1" />
      <Num value="-0.59%" tone="g" className="ml-2" />
      <Num value="820.9" tone="c" className="ml-1" />
    </div>
  </footer>
);

const Watermark = () => (
  <svg aria-hidden className="pointer-events-none absolute inset-0 size-full">
    <defs>
      <pattern id="mark" x="83" y="-8" width="256" height="28" patternUnits="userSpaceOnUse">
        <text y="20" fontSize="16" fill="#808080" fillOpacity=".07" fontFamily="'DejaVu Sans','Noto Sans CJK SC'">
          分析家公式网www.70822.Com
        </text>
      </pattern>
    </defs>
    <rect width="100%" height="100%" fill="url(#mark)" />
  </svg>
);

export default function App() {
  return (
    <div className="min-h-screen overflow-hidden bg-white pb-2 pr-[9px] font-['Liberation_Sans','Noto_Sans_CJK_SC',sans-serif] text-[12px]">
      <div className="relative bg-black shadow-[3px_3px_5px_rgba(0,0,0,0.7)]">
        <Toolbar />
        <div className="flex">
          <SideNav />
          <ChartPanel />
          <QuotePanel />
        </div>
        <StatusBar />
        <div className="h-0.5">
          <div className="ml-[76%] h-0.5 w-[18%] bg-[#b0b0b0]" />
        </div>
        <Watermark />
      </div>
    </div>
  );
}
